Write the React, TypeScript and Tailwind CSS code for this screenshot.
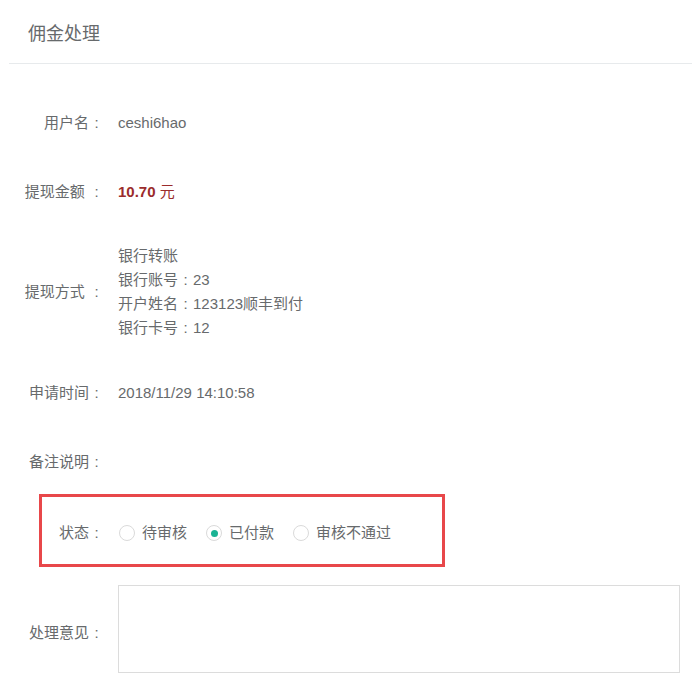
import React from "react";

const font = { fontFamily: '"Liberation Sans", "Noto Sans CJK SC", sans-serif' };

// centred full-width colon, as in the reference
const Colon = () => <span className="inline-block w-[15px] text-center">:</span>;

const Radio = ({ label, checked }: { label: string; checked?: boolean }) => {
  return (
    <label className="flex items-center gap-[7px] mr-[19px]">
      <span className="w-[16px] h-[16px] rounded-full border border-[#dadada] bg-white flex items-center justify-center shrink-0">
        {checked && <span className="w-[7px] h-[7px] rounded-full bg-[#1ab394]"></span>}
      </span>
      <span>{label}</span>
    </label>
  );
};

const App = () => {
  return (
    <div className="w-[692px] h-[700px] bg-white text-[15px] text-[#676a6c] overflow-hidden" style={font}>
      <div className="ml-[9px] h-[64px] border-b border-[#e7eaec] flex items-center pl-[19px] pt-[6px]">
        <h2 className="text-[18px] text-[#676a6c]">佣金处理</h2>
      </div>

      <div className="flex flex-col">
        <div className="flex items-center h-[24px] mt-[47px]">
          <div className="w-[104px] text-right">用户名<Colon /></div>
          <div className="ml-[14px]">ceshi6hao</div>
        </div>

        <div className="flex items-center h-[24px] mt-[45px]">
          <div className="w-[104px] text-right">提现金额 <Colon /></div>
          <div className="ml-[14px] text-[#9b2c2c]">
            <span className="font-bold">10.70</span> 元
          </div>
        </div>

        <div className="flex items-center mt-[40px]">
          <div className="w-[104px] text-right">提现方式 <Colon /></div>
          <div className="ml-[14px] leading-[24px]">
            <div>银行转账</div>
            <div>银行账号<Colon />23</div>
            <div>开户姓名<Colon />123123顺丰到付</div>
            <div>银行卡号<Colon />12</div>
          </div>
        </div>

        <div className="flex items-center h-[24px] mt-[41px]">
          <div className="w-[104px] text-right">申请时间<Colon /></div>
          <div className="ml-[14px]">2018/11/29 14:10:58</div>
        </div>

        <div className="flex items-center h-[24px] mt-[45px]">
          <div className="w-[104px] text-right">备注说明<Colon /></div>
        </div>

        <div className="ml-[39px] mt-[20px] w-[406px] h-[73px] border-[3px] border-[#e8474a] flex items-center pt-[5px]">
          <div className="w-[62px] text-right">状态<Colon /></div>
          <div className="ml-[15px] flex items-center">
            <Radio label="待审核" />
            <Radio label="已付款" checked />
            <Radio label="审核不通过" />
          </div>
        </div>

        <div className="flex items-center mt-[18px]">
          <div className="w-[104px] text-right pt-[8px]">处理意见<Colon /></div>
          <textarea className="ml-[14px] w-[562px] h-[88px] border border-[#dcdcdc] outline-none resize-none"></textarea>
        </div>
      </div>
    </div>
  );
};

export default App;
